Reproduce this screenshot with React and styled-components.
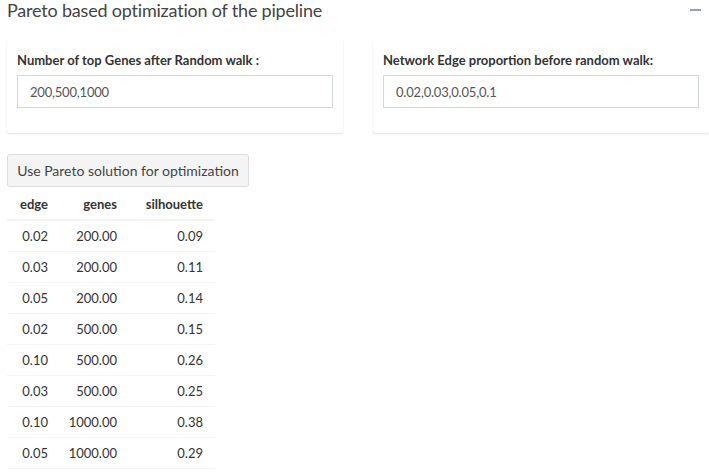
import React from "react";
import styled, { createGlobalStyle } from "styled-components";

const GlobalStyle = createGlobalStyle`
  body {
    margin: 0;
    background: #ffffff;
    font-family: "Lato", "Liberation Sans", sans-serif;
    color: #333;
  }
`;

const Page = styled.div`
  width: 709px;
  height: 473px;
  overflow: hidden;
  padding: 0 0 0 7px;
  box-sizing: border-box;
`;

const Header = styled.div`
  display: flex;
  align-items: center;
  justify-content: space-between;
  height: 20px;
  padding-right: 8px;
`;

const Title = styled.h3`
  margin: 0;
  font-size: 18px;
  font-weight: 400;
  color: #444;
  line-height: 1;
  letter-spacing: -0.2px;
`;

const Collapse = styled.span`
  width: 11px;
  height: 2px;
  background: #97a0b3;
`;

const Inputs = styled.div`
  display: grid;
  grid-template-columns: 336px 336px;
  column-gap: 30px;
  margin-top: 20px;
`;

const Card = styled.div`
  background: #fff;
  border-radius: 3px;
  box-shadow: 0 1px 2px rgba(0, 0, 0, 0.12);
  padding: 12px 10px 25px 10px;
`;

const Label = styled.label`
  display: block;
  font-weight: 700;
  font-size: 13px;
  color: #333;
  margin-bottom: 7px;
`;

const TextInput = styled.div`
  height: 33px;
  border: 1px solid #d2d6de;
  box-sizing: border-box;
  display: flex;
  align-items: center;
  padding-left: 12px;
  font-size: 13px;
  color: #555;
  letter-spacing: -0.2px;
`;

const Button = styled.button`
  display: block;
  margin-top: 21px;
  height: 33px;
  width: 242px;
  background: #f4f4f4;
  border: 1px solid #ddd;
  border-radius: 3px;
  font-family: inherit;
  font-size: 14px;
  color: #444;
`;

const Table = styled.table`
  border-collapse: collapse;
  table-layout: fixed;
  width: 208px;
  font-size: 13px;
  margin-top: 2px;
`;

const Col = styled.col`
  width: ${(p) => p.$w}px;
`;

const Th = styled.th`
  text-align: right;
  font-weight: 700;
  padding: 7px 8px 7px 8px;
  height: 15px;
  border-bottom: 2px solid #f4f4f4;
  color: #333;
  &:last-child {
    padding-right: 12px;
  }
`;

const Td = styled.td`
  text-align: right;
  padding: 7px 8px 7px 8px;
  border-bottom: 1px solid #f4f4f4;
  color: #333;
  height: 16px;
  &:last-child {
    padding-right: 12px;
  }
`;

const rows = [
  ["0.02", "200.00", "0.09"],
  ["0.03", "200.00", "0.11"],
  ["0.05", "200.00", "0.14"],
  ["0.02", "500.00", "0.15"],
  ["0.10", "500.00", "0.26"],
  ["0.03", "500.00", "0.25"],
  ["0.10", "1000.00", "0.38"],
  ["0.05", "1000.00", "0.29"],
];

const App = () => {
  return (
    <Page>
      <GlobalStyle />
      <Header>
        <Title>Pareto based optimization of the pipeline</Title>
        <Collapse />
      </Header>
      <Inputs>
        <Card>
          <Label>Number of top Genes after Random walk :</Label>
          <TextInput>200,500,1000</TextInput>
        </Card>
        <Card>
          <Label>Network Edge proportion before random walk:</Label>
          <TextInput>0.02,0.03,0.05,0.1</TextInput>
        </Card>
      </Inputs>
      <Button>Use Pareto solution for optimization</Button>
      <Table>
        <colgroup>
          <Col $w={49} />
          <Col $w={69} />
          <Col $w={90} />
        </colgroup>
        <thead>
          <tr>
            <Th>edge</Th>
            <Th>genes</Th>
            <Th>silhouette</Th>
          </tr>
        </thead>
        <tbody>
          {rows.map((r, i) => (
            <tr key={i}>
              {r.map((c, j) => (
                <Td key={j}>{c}</Td>
              ))}
            </tr>
          ))}
        </tbody>
      </Table>
    </Page>
  );
};

export default App;
